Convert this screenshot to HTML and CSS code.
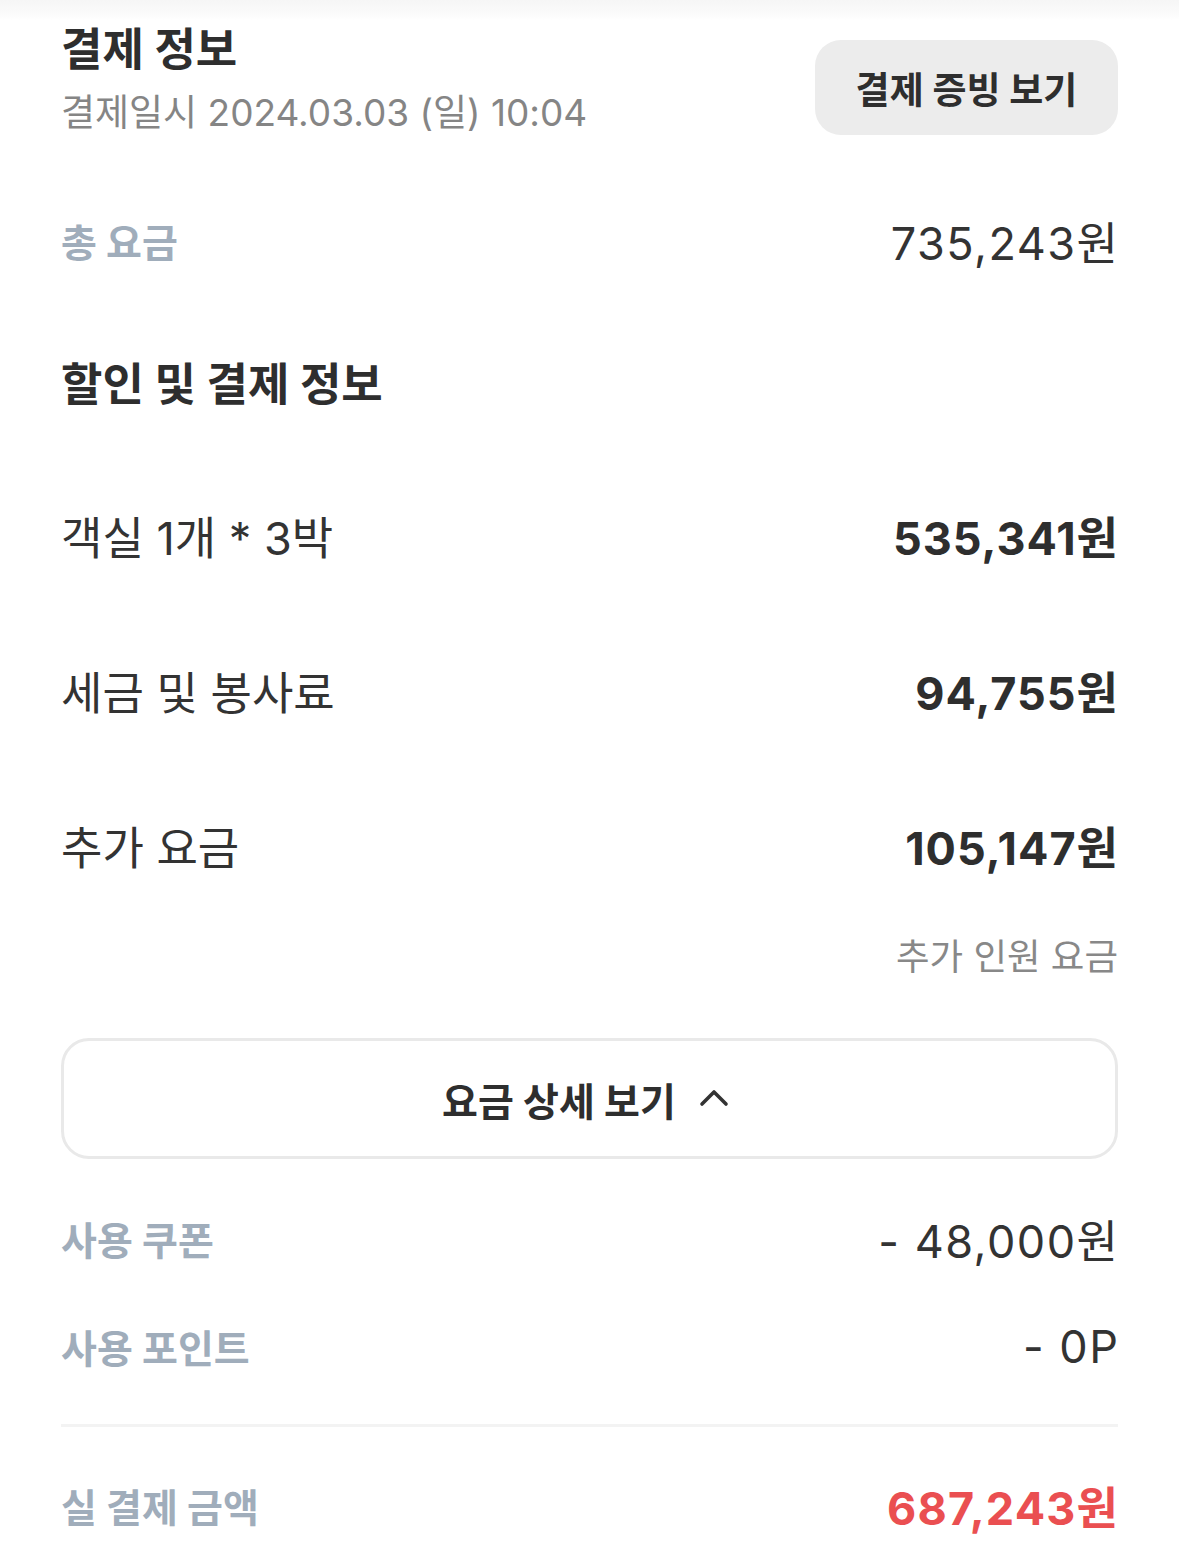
FILE: index.html
```html
<!DOCTYPE html>
<html lang="ko">
<head>
<meta charset="utf-8">
<title>결제 정보</title>
<link rel="stylesheet" href="styles.css">
</head>
<body>
<div class="top-shade"></div>
<main class="page">
  <header class="header">
    <div class="header-text">
      <h1 class="title">결제 정보</h1>
      <p class="subtitle">결제일시 2024.03.03 (일) 10:04</p>
    </div>
    <button class="receipt-btn">결제 증빙 보기</button>
  </header>

  <div class="row row-total">
    <span class="label">총 요금</span>
    <span class="value-regular">735,243원</span>
  </div>

  <h2 class="section-title">할인 및 결제 정보</h2>

  <div class="row row-item first">
    <span class="item-label">객실 1개 * 3박</span>
    <span class="value-bold">535,341원</span>
  </div>
  <div class="row row-item">
    <span class="item-label">세금 및 봉사료</span>
    <span class="value-bold">94,755원</span>
  </div>
  <div class="row row-item">
    <span class="item-label">추가 요금</span>
    <span class="value-bold">105,147원</span>
  </div>
  <div class="note">추가 인원 요금</div>

  <button class="detail-btn">
    <span>요금 상세 보기</span>
    <svg class="caret" width="30" height="20" viewBox="0 0 30 20" aria-hidden="true"><path d="M3 17 L15 5 L27 17" fill="none" stroke="#333" stroke-width="3.6" stroke-linecap="round" stroke-linejoin="round"/></svg>
  </button>

  <div class="row row-discount first-discount">
    <span class="label">사용 쿠폰</span>
    <span class="value-regular">- 48,000원</span>
  </div>
  <div class="row row-discount">
    <span class="label">사용 포인트</span>
    <span class="value-regular">- 0P</span>
  </div>

  <hr class="divider">

  <div class="row row-final">
    <span class="label">실 결제 금액</span>
    <span class="value-red">687,243원</span>
  </div>
</main>
</body>
</html>
```

FILE: styles.css
```css
* { box-sizing: border-box; }

html, body {
  margin: 0;
  padding: 0;
  background: #ffffff;
}

body {
  font-family: "Inter", "Noto Sans CJK KR", sans-serif;
  color: #333333;
  width: 1179px;
}

.top-shade {
  height: 20px;
  background: linear-gradient(#f6f6f6, #fbfbfb 70%, #ffffff);
}

.page {
  padding: 0 61px;
}

.header {
  display: flex;
  justify-content: space-between;
  align-items: flex-start;
}

.title {
  margin: 0;
  font-size: 45px;
  font-weight: 700;
  line-height: 60px;
  color: #2e2e2e;
}

.subtitle {
  margin: 8px 0 0;
  font-size: 37px;
  font-weight: 400;
  line-height: 50px;
  color: #858585;
}

.receipt-btn {
  margin-top: 20px;
  width: 303px;
  height: 95px;
  border: none;
  border-radius: 26px;
  background: #ececec;
  font-family: "Inter", "Noto Sans CJK KR", sans-serif;
  font-size: 37px;
  font-weight: 700;
  color: #2e2e2e;
  padding: 0;
}

.row {
  display: flex;
  justify-content: space-between;
  align-items: center;
  height: 60px;
}

.row-total { margin-top: 72px; }

.label {
  font-size: 39px;
  font-weight: 700;
  color: #a0adbb;
}

.value-regular {
  font-size: 45px;
  font-weight: 400;
  color: #333333;
  letter-spacing: 1.5px;
  margin-right: -1.5px;
}

.section-title {
  margin: 85px 0 0;
  font-size: 45px;
  font-weight: 700;
  line-height: 60px;
  color: #2e2e2e;
}

.row-item { margin-top: 95px; }
.row-item.first { margin-top: 90px; }

.item-label {
  font-size: 45px;
  font-weight: 400;
  color: #333333;
}

.value-bold {
  font-size: 45px;
  font-weight: 700;
  color: #2e2e2e;
  letter-spacing: 1px;
  margin-right: -1px;
}

.note {
  margin-top: 57px;
  text-align: right;
  font-size: 36.5px;
  line-height: 50px;
  color: #888888;
}

.detail-btn {
  margin-top: 56px;
  width: 100%;
  height: 121px;
  background: #ffffff;
  border: 3px solid #e9e9e9;
  border-radius: 28px;
  display: flex;
  align-items: center;
  justify-content: center;
  gap: 23px;
  font-family: "Inter", "Noto Sans CJK KR", sans-serif;
  font-size: 39px;
  font-weight: 700;
  color: #2e2e2e;
  padding: 0 8px 0 0;
}

.caret { display: block; margin-top: -4px; }

.row-discount { margin-top: 48px; }
.row-discount.first-discount { margin-top: 49px; }

.divider {
  margin: 48px 0 0;
  border: none;
  height: 3px;
  background: #f3f3f3;
}

.row-final { margin-top: 48px; }

.value-red {
  font-size: 45px;
  font-weight: 700;
  color: #ea4f51;
  letter-spacing: 1.2px;
  margin-right: -1.2px;
}
```
